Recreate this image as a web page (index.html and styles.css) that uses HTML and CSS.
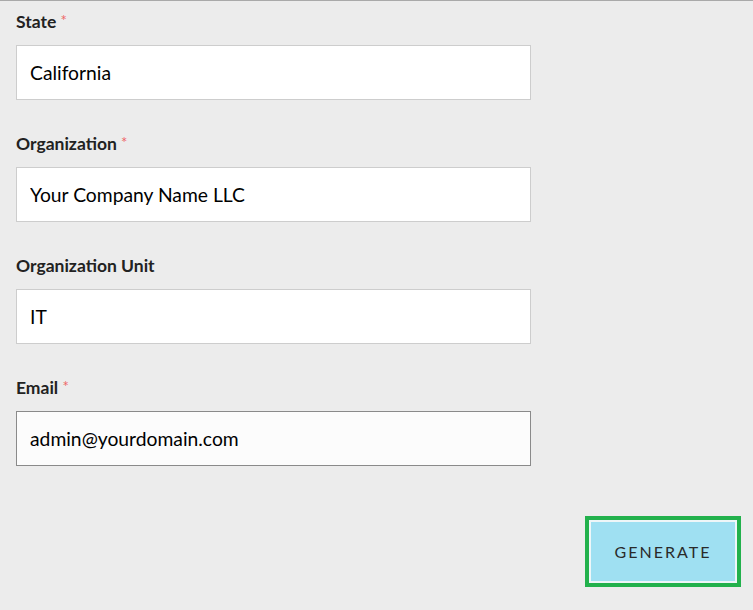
FILE: index.html
```html
<!DOCTYPE html>
<html lang="en">
<head>
  <meta charset="UTF-8" />
  <title>Generate CSR</title>
  <link rel="stylesheet" href="styles.css">
</head>
<body>
  <div class="csr-form">
    <div class="field">
      <label>State <span class="req">*</span></label>
      <input type="text" value="California">
    </div>
    <div class="field">
      <label>Organization <span class="req">*</span></label>
      <input type="text" value="Your Company Name LLC">
    </div>
    <div class="field">
      <label>Organization Unit</label>
      <input type="text" value="IT">
    </div>
    <div class="field">
      <label>Email <span class="req">*</span></label>
      <input type="text" class="active" value="admin@yourdomain.com">
    </div>
    <div class="actions">
      <button class="generate">Generate</button>
    </div>
  </div>
</body>
</html>
```

FILE: styles.css
```css
body {
  margin: 0;
  background-color: #ececec;
  font-family: Lato, "Open Sans", sans-serif;
  color: #222;
}
.csr-form {
  border-top: 1px solid #a9a9a9;
  padding: 11px 12px 0 16px;
  height: 609px;
  box-sizing: border-box;
}
.field {
  margin-bottom: 34px;
}
.field label {
  display: block;
  font-size: 17.5px;
  font-weight: bold;
  line-height: 20px;
  margin-bottom: 13px;
}
.req {
  color: #e66;
  font-size: 15px;
  font-weight: normal;
  vertical-align: top;
  line-height: 16px;
}
.field input {
  display: block;
  width: 515px;
  height: 55px;
  box-sizing: border-box;
  border: 1px solid #cdcdcd;
  background-color: #fff;
  padding: 0 13px;
  font-family: Lato, "Open Sans", sans-serif;
  font-size: 19.3px;
  color: #000;
}
.field input.active {
  border-color: #8a8a8a;
  background-color: #fcfcfc;
}
.actions {
  display: flex;
  justify-content: flex-end;
  padding-top: 20px;
}
.generate {
  width: 148px;
  height: 63px;
  margin-right: 4px;
  background-color: #9fe0f2;
  border: 2px solid #eef6f8;
  outline: 4px solid #22b14c;
  font-family: Lato, sans-serif;
  font-size: 16px;
  letter-spacing: 2px;
  text-transform: uppercase;
  color: #2a2a2a;
  cursor: pointer;
}
```
